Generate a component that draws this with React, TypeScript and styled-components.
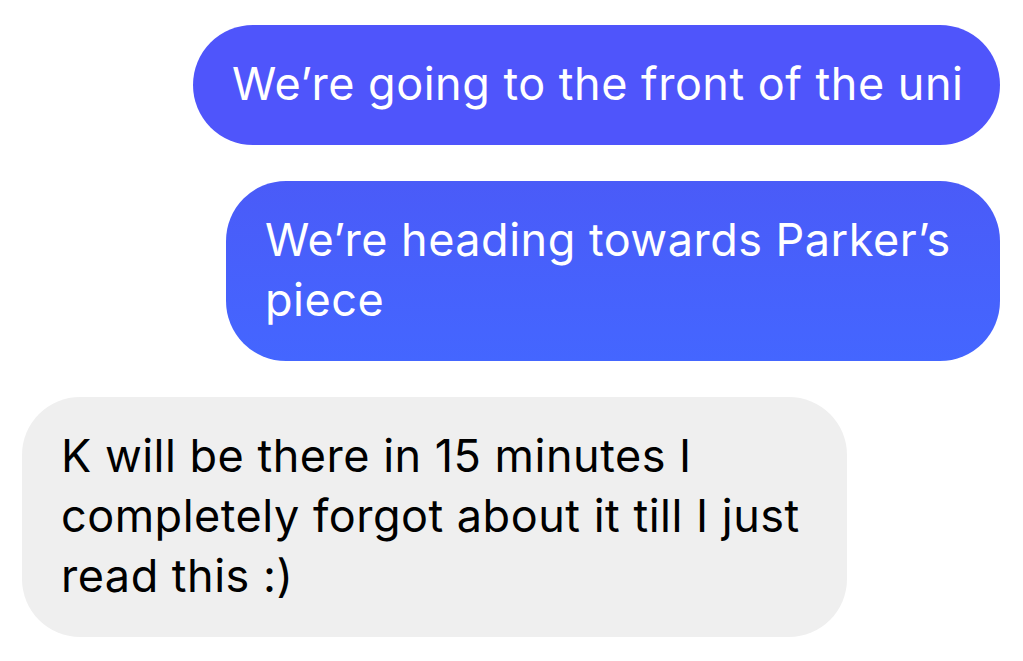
import React from "react";
import styled, { createGlobalStyle, css } from "styled-components";

const GlobalStyle = createGlobalStyle`
  html, body {
    margin: 0;
    padding: 0;
    background: #ffffff;
  }
  body {
    font-family: Inter, "Noto Sans", "Liberation Sans", sans-serif;
    -webkit-font-smoothing: antialiased;
  }
`;

const Thread = styled.div`
  display: flex;
  flex-direction: column;
  padding: 25px 23px 24px 22px;
  gap: 36px;
  width: 1023px;
  box-sizing: border-box;
`;

type Side = "out" | "in";
type Tint = "violet" | "blue" | "grey";

const Row = styled.div<{ $side: Side }>`
  display: flex;
  justify-content: ${(p) => (p.$side === "out" ? "flex-end" : "flex-start")};
`;

const Bubble = styled.div<{ $width: number; $tint: Tint }>`
  box-sizing: border-box;
  width: ${(p) => p.$width}px;
  padding: 29px 30px 31px 39px;
  border-radius: 60px;
  font-size: 45px;
  line-height: 60px;
  letter-spacing: 0.5px;
  white-space: nowrap;
  ${(p) =>
    p.$tint === "violet"
      ? css`
          background: #4f55fb;
          color: #ffffff;
        `
      : p.$tint === "blue"
      ? css`
          background: linear-gradient(180deg, #4a5bf8 0%, #4466ff 100%);
          color: #ffffff;
        `
      : css`
          background: #efefef;
          color: #000000;
          border-radius: 58px;
        `}
`;

const Line = styled.span`
  display: block;
`;

type Msg = {
  side: Side;
  tint: Tint;
  width: number;
  lines: string[];
};

const messages: Msg[] = [
  { side: "out", tint: "violet", width: 807, lines: ["We\u2019re going to the front of the uni"] },
  { side: "out", tint: "blue", width: 774, lines: ["We\u2019re heading towards Parker\u2019s", "piece"] },
  {
    side: "in",
    tint: "grey",
    width: 825,
    lines: [
      "K will be there in 15 minutes I",
      "completely forgot about it till I just",
      "read this :)",
    ],
  },
];

export default function App() {
  return (
    <>
      <GlobalStyle />
      <Thread>
        {messages.map((m, i) => (
          <Row key={i} $side={m.side}>
            <Bubble $tint={m.tint} $width={m.width}>
              {m.lines.map((l, j) => (
                <Line key={j}>{l}</Line>
              ))}
            </Bubble>
          </Row>
        ))}
      </Thread>
    </>
  );
}
